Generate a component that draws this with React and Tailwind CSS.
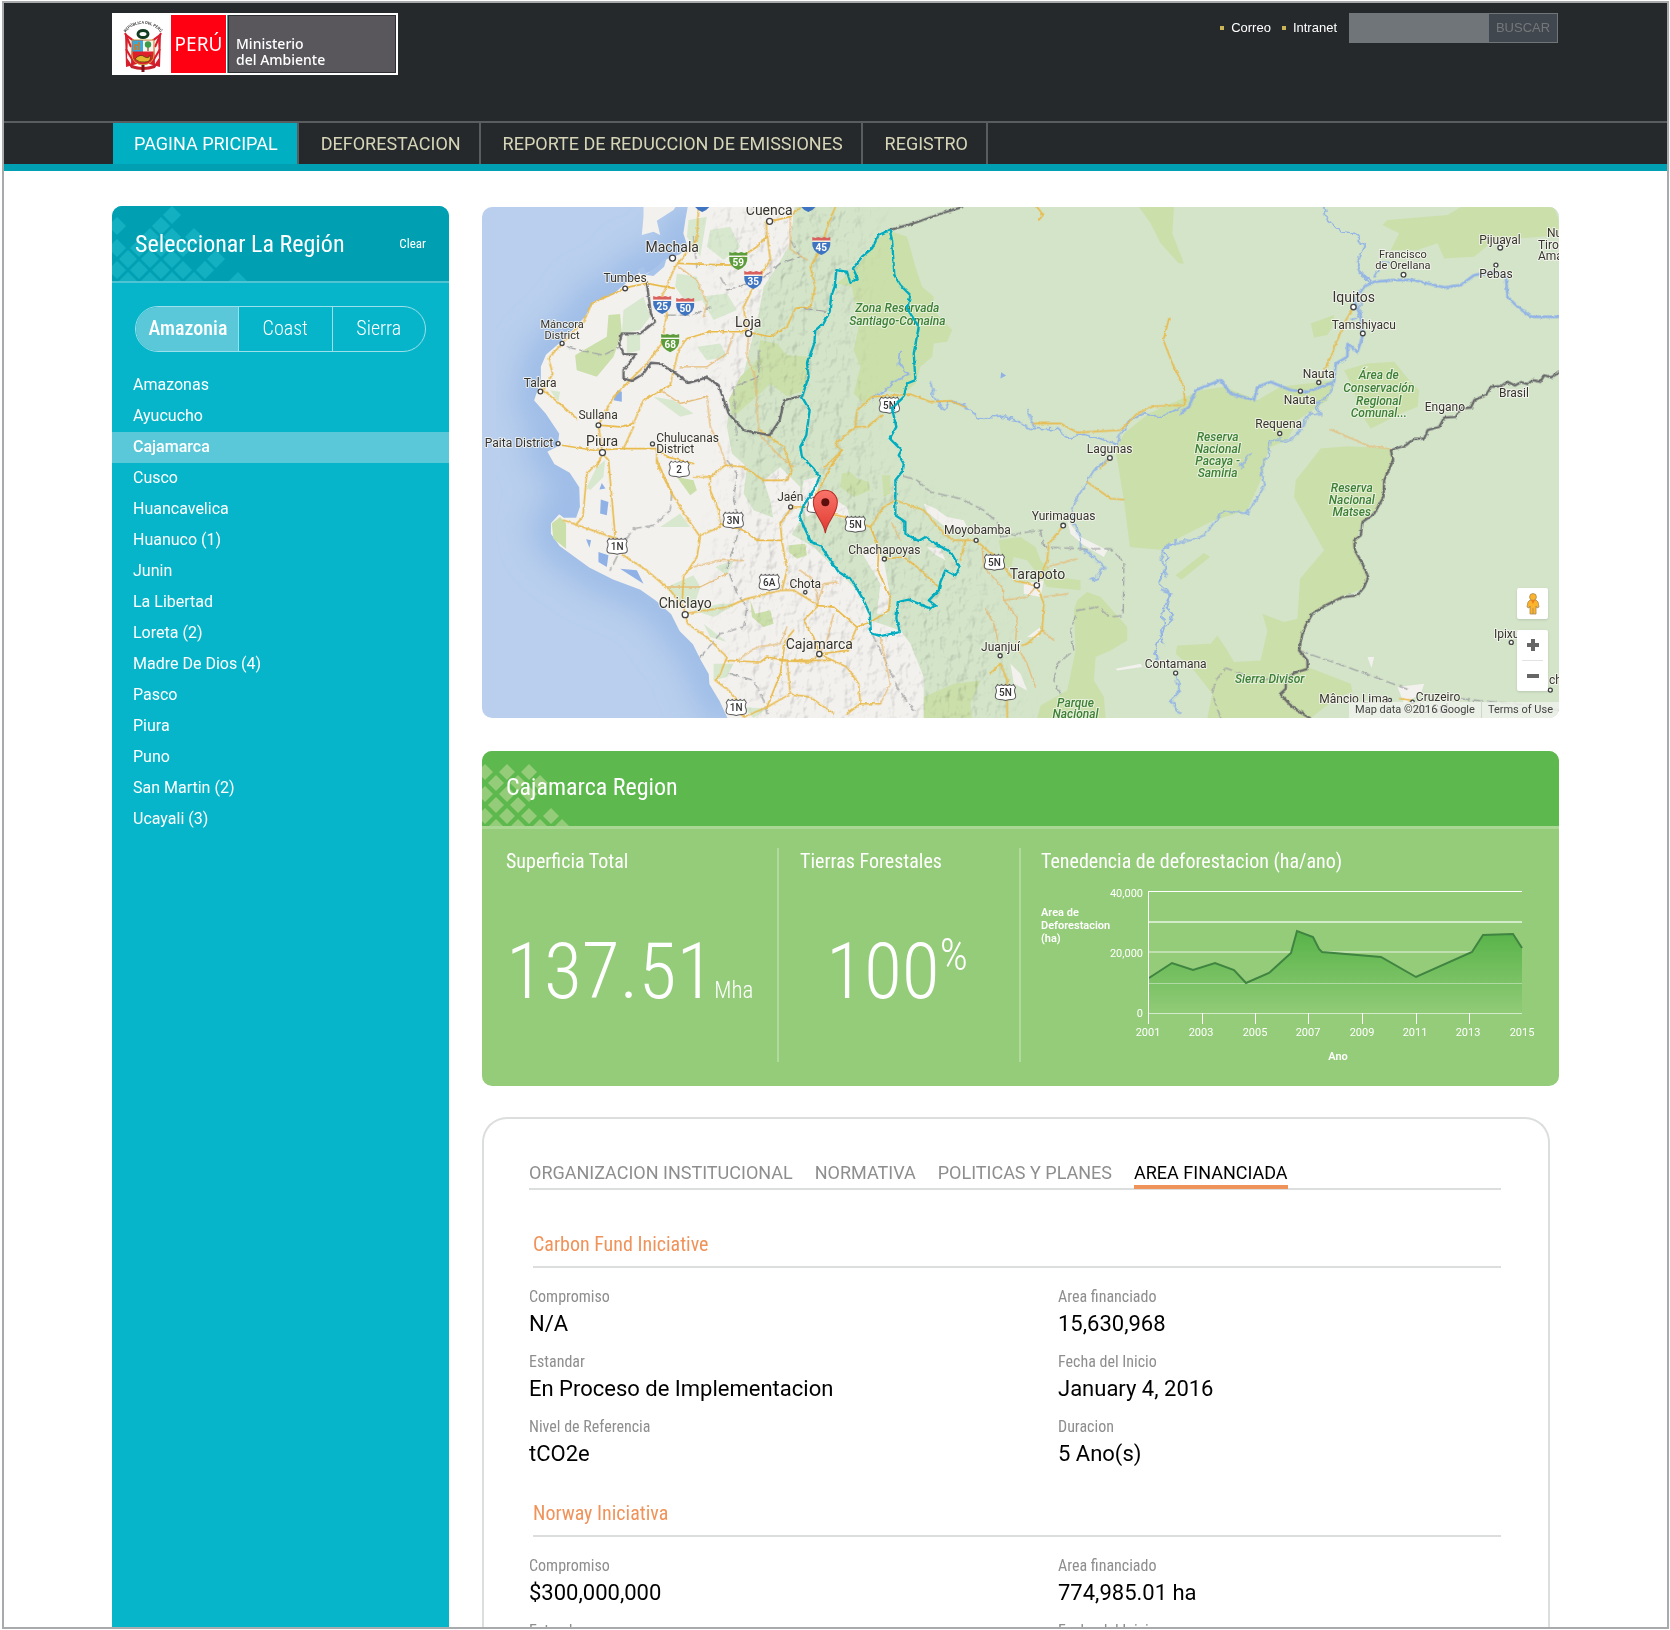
import React from "react";

const COND = "font-['Roboto_Condensed',Roboto,sans-serif]";

const NAV = ["PAGINA PRICIPAL", "DEFORESTACION", "REPORTE DE REDUCCION DE EMISSIONES", "REGISTRO"];

const REGIONS = [
  "Amazonas", "Ayucucho", "Cajamarca", "Cusco", "Huancavelica", "Huanuco (1)", "Junin", "La Libertad",
  "Loreta (2)", "Madre De Dios (4)", "Pasco", "Piura", "Puno", "San Martin (2)", "Ucayali (3)",
];

const TABS = ["ORGANIZACION INSTITUCIONAL", "NORMATIVA", "POLITICAS Y PLANES", "AREA FINANCIADA"];

const FUNDS = [
  {
    title: "Carbon Fund Iniciative",
    fields: [
      ["Compromiso", "N/A"], ["Area financiado", "15,630,968"],
      ["Estandar", "En Proceso de Implementacion"], ["Fecha del Inicio", "January 4, 2016"],
      ["Nivel de Referencia", "tCO2e"], ["Duracion", "5 Ano(s)"],
    ],
  },
  {
    title: "Norway Iniciativa",
    fields: [
      ["Compromiso", "$300,000,000"], ["Area financiado", "774,985.01 ha"],
      ["Estandar", ""], ["Fecha del Inicio", ""],
    ],
  },
];

/* ---------- Logo ---------- */

function Emblem() {
  return (
    <svg viewBox="0 0 44 56" className="h-[56px] w-[44px]" aria-hidden="true">
      <defs>
        <path id="emblem-arc" d="M4 18 A19 15 0 0 1 40 18" />
      </defs>
      <text fontSize="4" fontWeight="500" fill="#222" fontFamily="Roboto, sans-serif" textAnchor="middle">
        <textPath href="#emblem-arc" startOffset="50%">REPÚBLICA DEL PERÚ</textPath>
      </text>
      <path d="M4 17 L16 26 L16 48 L5 51 Z" fill="#d81e2c" />
      <path d="M40 17 L28 26 L28 48 L39 51 Z" fill="#d81e2c" />
      <path d="M7 22 L11 25 L10 48 L6 42 Z" fill="#f4f4f4" />
      <path d="M37 22 L33 25 L34 48 L38 42 Z" fill="#f4f4f4" />
      <path d="M4 17 L10 31 M40 17 L34 31 M5 33 L12 45 M39 33 L32 45" stroke="#d81e2c" strokeWidth="2" />
      <ellipse cx="22" cy="18" rx="5" ry="3.6" fill="none" stroke="#123c22" strokeWidth="3" />
      <path d="M11 24 H33 V38 Q33 48 22 49 Q11 48 11 38 Z" fill="#e01f2c" stroke="#c9a43b" strokeWidth="1" />
      <rect x="11.5" y="24.5" width="10.5" height="11" fill="#3aa9d8" />
      <rect x="22" y="24.5" width="10.5" height="11" fill="#f5f5ee" />
      <path d="M14 34 V29 H18 V26 M18 29 V34 M15 34 V31" stroke="#c77b2a" strokeWidth="1.6" fill="none" />
      <path d="M27 35 V30" stroke="#7b4a1e" strokeWidth="1.2" />
      <circle cx="27" cy="28.5" r="3.2" fill="#3c9a4b" />
      <path d="M14 43 Q19 37 24 41 Q28 43 29 39 Q31 46 24 46 Q18 47 14 43Z" fill="#e2b52c" stroke="#5a3a10" strokeWidth="0.8" />
      <path d="M7 47 Q22 55 37 47 L34 52 Q22 56 10 52 Z" fill="#c51f2b" />
      <path d="M22 49 V56" stroke="#7d1219" strokeWidth="3" />
    </svg>
  );
}

function Logo() {
  return (
    <a href="#inicio" className="flex h-[62px] w-[286px] bg-white p-[2px] text-white">
      <span className="flex w-[57px] items-center justify-center"><Emblem /></span>
      <span className="flex w-[55px] items-center justify-center bg-[#ff0012] font-['Noto_Sans',sans-serif] text-[19px]">PERÚ</span>
      <span className="ml-px w-px bg-[#3aa39c]" />
      <span className="flex flex-1 flex-col justify-end border border-[#2e2d31] bg-[#59575c] pb-[4px] pl-[7px] font-['Noto_Sans',sans-serif] text-[14px] leading-[16px] font-medium">
        <span>Ministerio</span>
        <span>del Ambiente</span>
      </span>
    </a>
  );
}

/* ---------- Diamond ornaments ---------- */

function Diamonds({ rows, x0, y0, r, fill, height }) {
  return (
    <svg viewBox={`0 0 140 ${height}`} width="140" height={height} className="absolute top-0 left-0" aria-hidden="true">
      {rows.map((cols, j) =>
        cols.map((k) => {
          const x = x0 + 11 * k;
          const y = y0 + 11 * j;
          return <path key={`${j}-${k}`} d={`M${x} ${y - r}L${x + r} ${y}L${x} ${y + r}L${x - r} ${y}Z`} fill={fill} />;
        })
      )}
    </svg>
  );
}

/* ---------- Map ---------- */

const poly = (s) => "M" + s.trim().split(/\s+/).join("L");

/* Shapes are grouped by map tile; every tile has its own origin. */
const PARKS = [
  [960, 0, "235,115 268,92 320,110 345,200 365,260 400,290 398,330 455,390 440,425 400,430 395,470 360,500 345,550 310,580 250,570 190,610 160,580 180,500 160,450 175,380 155,260 110,250 170,200"],
  [0, 0, "840,420 890,430 920,465 985,470 975,570 920,588 870,550 840,580 760,650 745,600 780,530 830,480"],
  [0, 0, "2005,640 2160,570 2230,560 2330,600 2400,560 2560,540 2540,600 2450,660 2420,720 2370,740 2360,760 2340,840 2300,930 2200,960 2100,1010 2040,1048 1948,1040 1930,900 1905,750 1930,700"],
  [0, 0, "1975,21 2080,21 2075,100 2110,190 2095,190 2040,130 2010,70"],
  [2040, 0, "680,60 860,45 900,21 1180,21 1193,60 1193,105 1140,110 1000,120 940,170 850,175 830,130 770,150 690,150 715,100 665,75"],
  [2040, 0, "450,370 520,345 515,380 500,405 460,412"],
  [2040, 0, "550,510 620,490 700,485 745,540 775,570 770,620 720,640 630,685 600,640 575,560"],
  [2040, 0, "445,790 480,745 560,738 690,745 700,780 670,840 668,890 640,940 600,970 582,1050 620,1130 605,1165 540,1190 495,1215 455,1240 425,1300 420,1340 440,1400 570,1450 575,1475 530,1490 450,1553 140,1553 155,1480 100,1410 45,1360 50,1335 150,1330 170,1305 200,1350 220,1385 300,1380 320,1290 305,1240 370,1265 410,1255 418,1135 490,1050 400,890 405,840"],
  [2040, 750, "45,375 130,308 148,320 62,388"],
  [900, 750, "890,450 920,425 960,440 1040,530 1040,570 990,600 945,620 940,690 970,740 975,803 770,803 780,765 860,720 885,600 880,480"],
  [900, 750, "430,740 520,700 600,690 570,760 575,803 430,803"],
  [900, 750, "185,70 210,65 230,85 265,95 270,120 220,140 180,110"],
  [900, 750, "305,75 330,75 330,130 310,140"],
  [900, 750, "655,270 720,260 765,290 780,330 830,380 900,390 900,420 800,410 740,330 700,320 690,360 665,330"],
  [0, 0, "385,345 420,342 425,400 400,470 350,530 290,510 285,465 310,450 380,410"],
  [0, 780, "240,170 258,190 258,265 220,235 215,190"],
  [0, 780, "810,420 825,460 870,450 880,490 850,500 815,470"],
  [0, 780, "590,50 640,60 650,90 630,105"],
  [0, 780, "925,255 975,250 980,285 950,295 925,275"],
];

const SOFT_GREEN = [
  [0, 0, "430,330 490,290 510,350 480,390 425,400"],
  [0, 0, "690,90 750,80 780,140 730,180 680,140"],
  [0, 0, "590,220 650,230 670,300 620,310 585,260"],
  [0, 0, "440,405 480,400 480,450 440,460"],
  [0, 0, "625,60 680,50 660,170 620,110"],
  [0, 0, "520,590 580,600 640,640 600,650"],
  [0, 0, "210,570 240,575 235,605"],
  [0, 0, "660,290 740,280 770,330 700,360"],
  [0, 0, "650,440 720,430 740,470 680,480"],
  [0, 780, "320,80 350,20 375,0 370,50 330,90"],
  [0, 780, "540,200 600,160 630,200"],
  [0, 780, "560,380 640,345 660,380 640,440 590,420"],
  [0, 780, "670,490 740,545 690,530"],
  [0, 780, "700,610 760,610 740,650 700,660"],
  [0, 780, "640,450 720,430 770,430 700,470"],
  [0, 780, "705,320 760,300 740,345"],
  [0, 780, "790,740 860,745 820,773"],
];

const PALE = [
  [900, 750, "70,90 110,80 115,120 200,170 210,210 150,195 110,180 80,200 60,160"],
  [900, 750, "430,160 465,175 500,200 550,210 560,230 500,235 470,210 440,185"],
  [900, 750, "240,300 280,280 310,330 330,440 320,490 290,490 300,400 270,350"],
  [900, 750, "440,290 480,295 495,330 460,310"],
  [900, 750, "730,400 790,390 780,440 730,430"],
  [900, 750, "860,210 900,260 980,300 970,320 910,285 870,250"],
  [900, 750, "690,640 720,670 740,720 700,700"],
  [900, 750, "740,560 780,530 775,560"],
  [900, 750, "1005,655 1080,640 1085,650 1010,660"],
  [2040, 750, "710,710 790,700 780,730 730,760"],
  [2040, 750, "620,620 640,620 632,652"],
];

const LAKES = [
  [0, 0, "412,570 425,575 425,605 400,600"],
  [0, 780, "362,118 385,125 380,165 360,160"],
  [0, 780, "355,275 385,285 380,320 355,305"],
  [0, 780, "318,237 333,240 328,262"],
  [0, 780, "420,325 470,330 490,370 450,345"],
  [0, 780, "365,68 376,85 358,88"],
  [960, 0, "602,516 617,526 600,535"],
];

const RIVERS = [
  [2040, 0, "60,640 85,620 105,570 180,540 210,580 280,600 290,560 330,545 390,570 440,575 520,545 525,490 560,470 560,430 590,455 605,410 600,350 580,300 610,260 640,245 700,240 760,240 850,262 900,255 940,225 1000,215 1035,230 1040,290 1070,320 1110,350 1193,350"],
];

const STREAMS = [
  [960, 0, "390,545 400,590 430,630 450,605 490,615 540,655 600,650 650,660 690,685 770,685 800,710 860,705 900,715 950,735 960,700 990,660 1030,640 1080,650 1140,620"],
  [2040, 0, "492,21 500,60 540,95 580,100 610,140 590,190 600,220 630,245"],
  [960, 0, "300,455 297,490 325,525 280,545 250,575 215,595"],
  [960, 0, "680,625 700,680"],
  [2040, 0, "520,550 500,590 470,610 480,640 440,645 430,680 390,720 330,720 325,760 300,810 310,860 260,940 190,930 150,980 120,1010 60,1025 20,1035 0,1070 20,1130"],
  [2040, 0, "270,760 245,790 240,800"],
  [900, 750, "1190,270 1150,300 1160,330 1135,400 1170,430 1145,480 1150,540 1120,600 1130,630"],
  [2040, 750, "0,420 30,430 20,470 40,500 0,540 10,580"],
  [2040, 750, "45,680 60,720 30,750 60,790"],
  [900, 750, "980,30 940,60 910,110 880,160 870,200 900,260 900,290 940,320 970,350 950,385 930,388"],
  [2040, 0, "600,300 600,340 575,360"],
  [2040, 0, "690,190 660,190 640,230"],
];

const BORDERS = [
  [0, 0, "500,250 512,340 525,365 480,400 425,400 417,430 430,462 468,462 430,510 430,535 455,542 490,520 512,488 540,490 580,515 625,548 680,532 715,555 745,640 790,690 868,705 898,660 912,600 960,588"],
  [960, 0, "268,90 345,68 430,38 485,21"],
  [2040, 0, "1193,518 1170,532 1150,525 1138,545 1115,540 1100,552 1080,546 1062,556 1040,545 1020,558 990,560 975,585 940,600 930,622 900,625 885,650 850,652 835,680 800,690 790,715 760,715 735,735 690,750 697,780 670,840 668,890 640,940 605,965 600,1005 580,1020 582,1050 605,1090 622,1130 610,1160 590,1185 545,1190 495,1215 455,1240 435,1275 425,1300 415,1350 440,1380 440,1405 400,1418 375,1440 375,1465 358,1480 385,1510 410,1530 448,1553"],
];

const DISTRICTS = [
  [900, 750, "370,78 410,90 450,125 540,145 610,180 650,215 660,260 740,245 780,240 790,290 900,295 990,295 1030,335 1028,495 990,500 950,470 890,480 870,540 880,600 830,640 820,690 840,730"],
  [2040, 750, "415,600 560,650 750,720"],
  [2040, 750, "900,745 1060,760 1193,780"],
  [0, 780, "575,95 570,150 520,195 460,205 430,250 390,330"],
  [2040, 750, "180,803 155,730 165,690 195,653 300,690 360,680"],
  [0, 0, "260,440 300,450 370,465 420,440"],
  [0, 780, "740,0 770,40 760,120 780,200 740,320 770,400 800,440 790,500 720,520 660,590"],
  [0, 780, "750,640 820,660 850,720 860,760"],
  [900, 750, "275,550 320,640 350,710 400,780"],
  [0, 0, "930,120 960,170 900,190 840,240 740,270 720,230"],
  [0, 0, "640,110 650,200"],
  [0, 0, "560,345 640,345 690,320"],
  [0, 0, "970,325 1045,335"],
  [0, 0, "835,450 835,530 760,560 770,720"],
];

const ROADS = [
  [0, 0, "500,250 440,262 335,310 310,365 246,430 205,475 218,520 190,570 250,620 290,655"],
  [0, 0, "245,735 340,750 430,745 530,745 560,770 640,790"],
  [0, 0, "355,675 420,680 460,670 490,600 570,555 595,450 620,415 690,395 800,395"],
  [0, 0, "355,675 400,590 450,540 500,490 545,430 560,340 545,290 585,200 650,120 655,21"],
  [0, 0, "355,675 367,757"],
  [0, 0, "595,190 750,195 830,140 860,110 858,64"],
  [0, 0, "500,250 580,265"],
  [0, 0, "800,395 790,320 820,260 870,180 862,110"],
  [0, 0, "870,64 930,50 960,21"],
  [0, 0, "800,395 870,410 920,380 945,325 990,320 1005,260 990,200 1020,150 1045,70 1065,21"],
  [0, 0, "460,680 430,745"],
  [0, 0, "530,745 530,790 575,880"],
  [0, 780, "350,20 367,-20 385,0 405,230 430,285 500,330 570,390 610,440 622,490 680,530 740,590 720,640 705,660 745,690 770,720 790,770"],
  [0, 780, "360,0 320,40 308,170 290,190"],
  [0, 780, "250,180 400,232"],
  [0, 780, "530,0 575,100 625,180 660,230 650,290 610,350 605,440"],
  [0, 780, "660,225 720,200 715,150 690,90 690,50 640,50"],
  [0, 780, "690,50 735,15 790,20 850,60 920,60 935,30 910,-40 840,-90"],
  [0, 780, "720,190 790,210 830,240 905,240 900,190 935,140"],
  [0, 780, "905,240 920,330 905,390 800,415 740,440 615,460"],
  [0, 780, "740,600 840,605 860,590 920,600 1050,600"],
  [0, 780, "905,390 940,390 1015,435 970,480 1000,530 1017,580"],
  [0, 780, "920,600 930,700 860,740 790,770"],
  [0, 780, "930,700 990,710 1060,760"],
  [0, 780, "860,740 900,640 915,540 940,510"],
  [900, 750, "185,0 150,50 120,110 90,170 32,170"],
  [900, 750, "150,190 210,205 270,230 310,170 345,150 430,180 490,250 520,270 587,270 620,300 650,320 700,390 769,405 800,330 805,280 848,226"],
  [900, 750, "270,230 295,290 292,360 330,440 325,480 270,515 230,530 160,470 110,465"],
  [900, 750, "312,326 370,320 410,350 475,410"],
  [900, 750, "555,270 540,330"],
  [900, 750, "769,405 790,460 785,540 740,580 725,585"],
  [900, 750, "659,640 630,670"],
  [900, 750, "660,640 680,690 680,803"],
  [900, 750, "117,611 200,650 235,700 240,760 300,760"],
  [900, 750, "240,760 200,790"],
  [900, 750, "0,630 90,635 117,611"],
  [900, 750, "117,611 200,600 230,530"],
  [900, 750, "920,95 990,145 1030,148"],
  [900, 750, "988,25 960,55"],
  [960, 0, "75,800 125,750 105,730 165,680 200,680 245,645"],
  [960, 0, "165,680 170,630 215,590 330,582 390,605 450,602 495,620"],
  [960, 0, "700,670 780,670 830,697 960,690 1010,640 1060,618 1152,615 1150,560 1115,490 1088,420 1105,355"],
  [960, 0, "710,21 728,45 715,60"],
  [2040, 0, "578,321 550,370 510,470 474,547"],
  [2040, 750, "720,745 755,750"],
];

const MINOR_ROADS = [
  [900, 750, "605,290 610,350 665,410 670,450 740,440 769,405"],
  [900, 750, "670,450 710,500 705,580 740,640 765,710"],
  [900, 750, "615,475 640,520 655,580"],
  [900, 750, "800,350 890,325"],
  [900, 750, "790,440 860,430"],
  [900, 750, "785,540 820,570"],
  [900, 750, "335,220 360,270"],
  [2040, 0, "510,688 625,738 690,745"],
  [0, 0, "595,200 650,240 680,310 670,350"],
  [0, 0, "600,500 680,500 740,460 760,400"],
  [0, 0, "805,400 800,470 825,530 835,700 900,770 940,800"],
  [0, 0, "540,570 600,610 680,590 690,680 720,740 740,800"],
  [0, 0, "930,50 930,150 980,180"],
  [0, 780, "640,320 720,300 790,300"],
  [0, 780, "560,380 660,380 740,340"],
  [0, 780, "770,600 830,560 900,550 920,500"],
  [0, 780, "1060,460 1040,540 1017,580"],
  [0, 780, "960,330 1000,360 1015,435"],
  [900, 750, "110,465 130,400 170,395"],
  [900, 750, "300,760 330,700 300,560"],
];

const OUTLINE =
  "1228,90 1195,105 1175,145 1145,170 1118,205 1132,235 1110,248 1100,215 1068,210 1063,260 1052,290 1048,335 1030,370 1005,390 1002,430 980,490 985,530 965,590 988,630 978,705 960,740 965,770 1000,805 1018,830 1000,870 970,915 958,950 992,1025 1020,1035 1075,1115 1115,1140 1150,1200 1168,1240 1172,1298 1200,1307 1258,1295 1248,1255 1252,1205 1285,1198 1350,1225 1365,1215 1345,1200 1375,1170 1380,1145 1395,1110 1425,1125 1438,1100 1410,1055 1365,1030 1335,1010 1315,1022 1275,1000 1275,965 1245,945 1245,840 1268,810 1270,790 1255,765 1263,750 1228,715 1248,680 1235,625 1270,590 1280,550 1305,540 1300,460 1315,380 1280,325 1290,285 1260,255 1242,225 1235,120 1228,90";

const COAST =
  "625,21 618,60 612,100 625,140 600,165 560,180 545,205 500,222 480,215 470,235 440,250 400,285 340,308 318,350 290,380 246,425 200,465 185,500 185,540 165,600 200,640 240,700 235,740 205,755 225,790 270,815 300,860 302,920 290,955 250,955 238,945 215,970 215,1000 240,1035 330,1100 400,1135 480,1165 530,1200 575,1240 600,1290 640,1330 665,1380 688,1420 690,1450 720,1500 748,1560";

const CITY_DOTS = [
  [868, 64, 9], [577, 174, 9], [435, 265, 7], [246, 430, 6], [181, 574, 7], [355, 675, 7], [234, 730, 6], [367, 757, 9],
  [517, 731, 6], [805, 400, 9], [1888, 773, 7], [931, 920, 6], [975, 1176, 5], [615, 1243, 9], [1017, 1361, 8],
  [1212, 1076, 6], [1487, 1020, 6], [1669, 1155, 8], [1748, 976, 7], [1559, 1366, 6], [2085, 1418, 6], [2618, 321, 8],
  [2646, 400, 7], [2768, 224, 7], [3058, 143, 7], [3045, 195, 6], [2514, 547, 6], [2459, 573, 6], [2397, 700, 6],
  [3091, 1326, 6], [2727, 1499, 5], [2795, 1504, 5], [3208, 1469, 6],
];

const CITIES = [
  [287, 8, 14, "Cuenca"], [190, 45, 14, "Machala"], [143, 75, 12, "Tumbes"], [80, 121, 11, "Máncora"], [80, 132, 11, "District"],
  [58, 180, 12, "Talara"], [116, 212, 12, "Sullana"], [37, 240, 12, "Paita District"], [120, 239, 14, "Piura"],
  [266, 120, 14, "Loja"], [627, 246, 12, "Lagunas"], [308, 294, 12, "Jaén"], [323, 381, 12, "Chota"],
  [203, 401, 14, "Chiclayo"], [337, 442, 14, "Cajamarca"], [402, 347, 12, "Chachapoyas"], [495, 327, 12, "Moyobamba"],
  [555, 372, 14, "Tarapoto"], [581, 313, 12, "Yurimaguas"], [518, 444, 12, "Juanjuí"], [693, 461, 12, "Contamana"],
  [871, 95, 14, "Iquitos"], [881, 122, 12, "Tamshiyacu"], [920, 51, 11, "Francisco"], [920, 62, 11, "de Orellana"],
  [1017, 37, 12, "Pijuayal"], [1013, 71, 12, "Pebas"], [836, 171, 12, "Nauta"], [817, 197, 12, "Nauta"],
  [796, 221, 12, "Requena"], [962, 204, 12, "Engano"], [1031, 190, 12, "Brasil"], [871, 496, 12, "Mâncio Lima"],
  [949, 506, 12, "do Sul"],
];

const CITIES_LEFT = [
  [174, 235, "Chulucanas"], [174, 246, "District"], [1064, 30, "Nu"], [1055, 42, "Tiro"], [1055, 53, "Ama"],
  [1011, 431, "Ipixu"], [933, 494, "Cruzeiro"], [1066, 477, "ch"],
];

const PARK_NAMES = [
  [415, 105, "Zona Reservada"], [415, 118, "Santiago-Comaina"], [593, 500, "Parque"], [593, 511, "Nacional"],
  [896, 172, "Área de"], [896, 185, "Conservación"], [896, 198, "Regional"], [896, 210, "Comunal..."],
  [735, 234, "Reserva"], [735, 246, "Nacional"], [735, 258, "Pacaya -"], [735, 270, "Samiria"],
  [869, 285, "Reserva"], [869, 297, "Nacional"], [869, 309, "Matses"], [787, 476, "Sierra Divisor"],
];

const US_SHIELDS = [
  [197, 262, "2"], [135, 339, "1N"], [251, 313, "3N"], [287, 375, "6A"], [254, 500, "1N"], [335, 298, ""],
  [407, 198, "5N"], [373, 317, "5N"], [512, 355, "5N"], [523, 485, "5N"],
];

const INTERSTATES = [
  [339, 38, "45", "#3f74c1"], [271, 72, "35", "#3f74c1"], [180, 97, "25", "#3f74c1"], [203, 99, "50", "#3f74c1"],
  [256, 53, "59", "#5c9c3b"], [188, 135, "68", "#5c9c3b"], [220, -5, "", "#3f74c1"], [326, -5, "", "#3f74c1"],
];

function Shapes({ items, ...rest }) {
  return (
    <g {...rest}>
      {items.map(([x, y, pts], i) => (
        <path key={i} d={poly(pts)} transform={`translate(${x} ${y})`} />
      ))}
    </g>
  );
}

function MapDrawing() {
  return (
    <svg viewBox="0 0 1076 511" className="block h-auto w-full" role="img" aria-label="Mapa de la región Cajamarca" fontFamily="Roboto, sans-serif">
      <defs>
        <filter id="shore" x="-20%" y="-20%" width="140%" height="140%">
          <feGaussianBlur stdDeviation="46" />
        </filter>
        <filter id="wiggle" filterUnits="userSpaceOnUse" x="0" y="0" width="3260" height="1580">
          <feTurbulence type="fractalNoise" baseFrequency="0.08" numOctaves="2" seed="4" />
          <feDisplacementMap in="SourceGraphic" scale="9" xChannelSelector="R" yChannelSelector="G" />
        </filter>
        <filter id="meander" filterUnits="userSpaceOnUse" x="0" y="0" width="3260" height="1580">
          <feTurbulence type="fractalNoise" baseFrequency="0.05" numOctaves="2" seed="7" />
          <feDisplacementMap in="SourceGraphic" scale="22" xChannelSelector="R" yChannelSelector="G" />
        </filter>
        <filter id="relief" filterUnits="userSpaceOnUse" x="0" y="0" width="1076" height="511">
          <feTurbulence type="fractalNoise" baseFrequency="0.09 0.07" numOctaves="3" seed="9" result="n" />
          <feDiffuseLighting in="n" surfaceScale="3" diffuseConstant="1.28" lightingColor="#ffffff" result="l">
            <feDistantLight azimuth="225" elevation="55" />
          </feDiffuseLighting>
          <feComposite in="l" in2="SourceGraphic" operator="in" />
        </filter>
        <filter id="soften" x="-10%" y="-10%" width="120%" height="120%">
          <feGaussianBlur stdDeviation="16" />
        </filter>
        <mask id="mountains">
          <path d="M235 -40 L390 -40 L370 120 L380 200 L390 260 L440 300 L500 340 L540 560 L280 560 L250 430 L235 380 L250 250 L260 210 L220 165 L235 80 Z" fill="#fff" filter="url(#soften)" />
        </mask>
        <linearGradient id="pin" x1="0" y1="0" x2="0" y2="1">
          <stop offset="0" stopColor="#f9746a" />
          <stop offset="1" stopColor="#e0392f" />
        </linearGradient>
      </defs>
      <rect width="1076" height="511" fill="#b9cfed" />
      <g transform="translate(-2 -7) scale(0.33333)">
        <path d={poly(COAST)} fill="none" stroke="#9dbce7" strokeWidth="120" filter="url(#shore)" />
        <path d={poly(COAST) + "L3300 1560L3300 0L625 0Z"} fill="#f3f1ee" stroke="#f3f1ee" strokeWidth="5" strokeLinejoin="round" />
        <path d="M490 0L490 50L485 105L520 95L540 105L530 62L580 30L600 0Z" fill="#f3f1ee" />
        <path d="M472 208L490 200L500 222L530 200L560 172L552 200L520 228L480 222Z" fill="#a9c4ea" />
        <Shapes items={SOFT_GREEN} fill="#d8e8cf" />
        <path
          d="M945 0L930 130L890 200L850 260L835 340L815 420L790 520L750 600L740 680L755 760L800 800L790 880L820 930L900 960L930 1000L1000 1040L1080 1120L1140 1180L1170 1260L1260 1290L1290 1330L1330 1430L1330 1560L3300 1560L3300 0Z"
          fill="#d3e4c9"
        />
        <path d="M850 840L900 800L960 860L960 960L930 1010L880 960L870 900Z" fill="#f3f1ee" />
        <Shapes items={PARKS} fill="#cbdfaa" strokeLinejoin="round" />
        <Shapes items={PALE} fill="#f3f1ee" />
      </g>
      <g mask="url(#mountains)" className="mix-blend-multiply" opacity="0.5">
        <rect width="1076" height="511" fill="#fff" filter="url(#relief)" />
      </g>
      <g transform="translate(-2 -7) scale(0.33333)" fill="none" strokeLinejoin="round" strokeLinecap="round">
        <Shapes items={LAKES} fill="#8fb1e5" />
        <g filter="url(#meander)">
          <Shapes items={STREAMS} stroke="#92b3e6" strokeWidth="5" />
        </g>
        <g filter="url(#wiggle)">
          <Shapes items={DISTRICTS} stroke="#a3a5a6" strokeWidth="4" strokeDasharray="26 14" />
          <Shapes items={RIVERS} stroke="#92b3e6" strokeWidth="8" />
          <Shapes items={MINOR_ROADS} stroke="#e6bd7a" strokeWidth="4" />
          <Shapes items={ROADS} stroke="#e9bb4d" strokeWidth="5" />
          <Shapes items={BORDERS} stroke="#68686a" strokeWidth="7" />
        </g>
      </g>
      <g transform="translate(-2 -7) scale(0.33333)">
        {CITY_DOTS.map(([x, y, r]) => (
          <circle key={`${x}-${y}`} cx={x} cy={y} r={r} fill="#fff" stroke="#444" strokeWidth="4" />
        ))}
      </g>

      {US_SHIELDS.map(([x, y, t], i) => (
        <g key={i} transform={`translate(${x} ${y})`}>
          <path
            d="M-8 -8 Q-6 -6 -4 -8 Q-2 -6 0 -8 Q2 -6 4 -8 Q6 -6 8 -8 L10 -5 Q8 -2 10 2 Q11 7 6 7 Q3 7 0 8 Q-3 7 -6 7 Q-11 7 -10 2 Q-8 -2 -10 -5 Z"
            fill="#fff" stroke="#5b5b5b" strokeWidth="1"
          />
          <text textAnchor="middle" y="4" fontSize="10" fontWeight="500" fill="#333">{t}</text>
        </g>
      ))}
      {INTERSTATES.map(([x, y, t, c], i) => (
        <g key={i} transform={`translate(${x} ${y})`}>
          <path d="M-9 -3 H9 Q10 6 0 10 Q-10 6 -9 -3Z" fill={c} />
          <path d="M-9 -8 L-6 -7 L-3 -8 L0 -7 L3 -8 L6 -7 L9 -8 V-4 H-9Z" fill={c === "#3f74c1" ? "#d9605c" : c} />
          <path d="M-9 -4 H9" stroke="#fff" strokeWidth="1" />
          <text textAnchor="middle" y="6" fontSize="10" fontWeight="700" fill="#fff">{t}</text>
        </g>
      ))}

      <g fill="#37332e" stroke="#f7f7f2" strokeWidth="2" strokeOpacity="0.8" paintOrder="stroke" strokeLinejoin="round">
        {CITIES.map(([x, y, s, t], i) => (
          <text key={i} x={x} y={y} fontSize={s} textAnchor="middle">{t}</text>
        ))}
        {CITIES_LEFT.map(([x, y, t]) => (
          <text key={`${x}${y}`} x={x} y={y} fontSize="12">{t}</text>
        ))}
      </g>
      <g fill="#3d7f37" stroke="#eef5e6" strokeWidth="2" strokeOpacity="0.8" paintOrder="stroke" fontStyle="italic">
        {PARK_NAMES.map(([x, y, t]) => (
          <text key={`${x}${y}`} x={x} y={y} fontSize="12" fontWeight="500" textAnchor="middle">{t}</text>
        ))}
      </g>
      <g transform="translate(-2 -7) scale(0.33333)">
        <path d={poly(OUTLINE) + "Z"} fill="none" stroke="#04adc0" strokeWidth="7" strokeLinejoin="round" filter="url(#wiggle)" />
      </g>
      <path d="M343 326 C342 314 331 308 331 295 A12 12 0 0 1 355 295 C355 308 344 314 343 326Z" fill="url(#pin)" stroke="#b52d26" strokeWidth="1" />
      <circle cx="343" cy="295" r="4" fill="#5c0f0c" />
    </svg>
  );
}

function MapPanel() {
  return (
    <section aria-label="Mapa" className="relative overflow-hidden rounded-[10px]">
      <MapDrawing />
      <div className="absolute right-[11px] bottom-[27px] flex flex-col gap-[11px]">
        <button type="button" aria-label="Street View" className="flex h-[31px] w-[31px] items-center justify-center rounded-[2px] bg-white shadow-sm">
          <svg viewBox="0 0 14 22" className="h-[22px] w-[14px]" aria-hidden="true">
            <path d="M4 7 H10 L12 9 L13 14 L11 15 L10 13 V21 H4 V13 L3 15 L1 14 L2 9 Z" fill="#fbb42c" stroke="#a98a56" strokeWidth="0.8" />
            <circle cx="7" cy="4" r="3.4" fill="#fbb42c" stroke="#a98a56" strokeWidth="0.8" />
            <path d="M5 7 L7 11 L9 7 Z" fill="#f07f1a" />
            <path d="M7 15 V21" stroke="#a98a56" strokeWidth="0.8" />
          </svg>
        </button>
        <div className="flex w-[31px] flex-col items-center rounded-[2px] bg-white shadow-sm">
          <button type="button" aria-label="Acercar" className="flex h-[30px] w-full items-center justify-center">
            <svg viewBox="0 0 12 12" className="h-3 w-3"><path d="M6 0V12M0 6H12" stroke="#666" strokeWidth="4" /></svg>
          </button>
          <span className="h-px w-[21px] bg-[#e3e3e3]" />
          <button type="button" aria-label="Alejar" className="flex h-[30px] w-full items-center justify-center">
            <svg viewBox="0 0 12 12" className="h-3 w-3"><path d="M0 6H12" stroke="#666" strokeWidth="4" /></svg>
          </button>
        </div>
      </div>
      <div className="absolute right-0 bottom-0 flex h-4 items-center bg-[#f0f3ee]/80 font-[Roboto,sans-serif] text-[11px] text-[#444]">
        <span className="px-[6px]">Map data ©2016 Google</span>
        <a href="#terminos" className="border-l border-[#cfd6cb] px-[6px]">Terms of Use</a>
      </div>
    </section>
  );
}

/* ---------- Region summary ---------- */

const TREND = "1,87 24,72 45,79 67,72 86,79 98,92 121,82 143,62 149,40 165,46 171,58 174,61 233,66 268,86 324,61 335,44 365,43 374,57";
const GRID = [
  [0, 1], [30, 0.6], [61, 0.8], [92, 0.4], [122, 0.6],
];

function TrendChart() {
  return (
    <svg viewBox="0 0 496 175" className="block h-auto w-full max-w-[496px]" role="img" aria-label="Tenedencia de deforestacion" fontFamily="Roboto, sans-serif" fontSize="11" fill="#fff">
      <defs>
        <linearGradient id="trend" x1="0" y1="0" x2="0" y2="1">
          <stop offset="0" stopColor="#57b348" />
          <stop offset="1" stopColor="#57b348" stopOpacity="0.05" />
        </linearGradient>
      </defs>
      <g fontWeight="600">
        <text x="0" y="29">Area de</text>
        <text x="0" y="42">Deforestacion</text>
        <text x="0" y="55">(ha)</text>
        <text x="297" y="173" textAnchor="middle">Ano</text>
      </g>
      <g textAnchor="end">
        <text x="102" y="10">40,000</text>
        <text x="102" y="70">20,000</text>
        <text x="102" y="130">0</text>
      </g>
      <g transform="translate(107 4)">
        <path d={`M1,122L${TREND.split(" ").join("L")}L374,122Z`} fill="url(#trend)" />
        {GRID.map(([y, o]) => (
          <path key={y} d={y === 61 ? "M0 61H144M174 61H324" : `M0 ${y === 30 ? 31 : y + 0.5}H374`} stroke="#fff" strokeOpacity={o} strokeWidth={y === 30 ? 2 : 1} />
        ))}
        <path d={poly(TREND)} fill="none" stroke="#3f8440" strokeWidth="2" />
        <path d="M0.5 0V133" stroke="#fff" />
        {[54, 107, 160, 214, 268, 321].map((x) => (
          <path key={x} d={`M${x + 0.5} 122V133`} stroke="#fff" />
        ))}
        {[2001, 2003, 2005, 2007, 2009, 2011, 2013, 2015].map((year, i) => (
          <text key={year} x={Math.round(i * 53.4)} y="145" textAnchor="middle">{year}</text>
        ))}
      </g>
    </svg>
  );
}

function RegionSummary() {
  return (
    <section className="overflow-hidden rounded-[10px] bg-[#94cc79] text-white">
      <header className="relative flex h-[75px] items-center overflow-hidden bg-[#5db84d] pb-[3px] pl-6">
        <Diamonds rows={[[0, 2, 4], [1, 3, 5], [0, 2, 4], [1, 3], [0, 2, 4, 6], [1, 3, 5, 7]]} x0={3} y0={21} r={8} fill="#94cc79" height={75} />
        <h2 className={`relative text-[24px] ${COND}`}>Cajamarca Region</h2>
      </header>
      <div className="flex border-t-[3px] border-[#abd794] pt-[19px] pb-6">
        <div className="w-[295px] pl-6">
          <h3 className={`text-[20px] leading-[27px] ${COND}`}>Superficia Total</h3>
          <p className={`mt-[58px] flex items-baseline leading-none font-light ${COND}`}>
            <span className="text-[78px]">137.51</span>
            <span className="text-[23px]">Mha</span>
          </p>
        </div>
        <div className="w-[242px] border-l-2 border-[#b2da9f] pl-[21px]">
          <h3 className={`text-[20px] leading-[27px] ${COND}`}>Tierras Forestales</h3>
          <p className={`mt-[58px] flex items-start pl-[26px] leading-none font-light ${COND}`}>
            <span className="text-[78px]">100</span>
            <span className="text-[44px]">%</span>
          </p>
        </div>
        <div className="min-w-0 flex-1 border-l-2 border-[#b2da9f] pl-5">
          <h3 className={`text-[20px] leading-[27px] ${COND}`}>Tenedencia de deforestacion (ha/ano)</h3>
          <div className="mt-3"><TrendChart /></div>
        </div>
      </div>
    </section>
  );
}

/* ---------- Funding ---------- */

function FundingPanel() {
  return (
    <section className="mr-[9px] rounded-t-[25px] border-2 border-b-0 border-[#dcdddd] pt-[41px] pr-[47px] pb-10 pl-[45px]">
      <div role="tablist" className="flex gap-[22px] border-b-2 border-[#dcdddd] font-[Roboto,sans-serif] text-[18px] leading-[25px] text-[#8e8e8e]">
        {TABS.map((t, i) => (
          <button
            key={t}
            type="button"
            role="tab"
            aria-selected={i === 3}
            className={i === 3 ? "-mb-px border-b-4 border-[#f0935a] text-black" : "-mb-px border-b-4 border-transparent"}
          >
            {t}
          </button>
        ))}
      </div>
      {FUNDS.map((f, i) => (
        <article key={f.title} className={i === 0 ? "mt-[41px]" : "mt-8"}>
          <h3 className={`ml-1 border-b-2 border-[#dcdddd] pb-[8px] text-[20px] leading-[27px] text-[#f0935a] ${COND}`}>{f.title}</h3>
          <dl className="mt-[17px] grid grid-cols-[529px_1fr] gap-y-3">
            {f.fields.map(([label, value]) => (
              <div key={label}>
                <dt className={`text-[16px] leading-6 text-[#8e8e8e] ${COND}`}>{label}</dt>
                <dd className="min-h-[29px] font-[Roboto,sans-serif] text-[22px] leading-[29px] text-black">{value}</dd>
              </div>
            ))}
          </dl>
        </article>
      ))}
    </section>
  );
}

/* ---------- Sidebar ---------- */

function Sidebar() {
  return (
    <aside className="w-[337px] shrink-0 overflow-hidden rounded-t-[10px] bg-[#06b5ca] text-white">
      <header className="relative flex h-[75px] items-center justify-between overflow-hidden bg-[#00a0b2] px-[23px]">
        <Diamonds rows={[[5], [0, 4], [3, 5, 7], [0, 2, 4, 6], [1, 3, 5, 9], [0, 2, 4, 6, 8], [1, 3, 5, 7, 11]]} x0={5} y0={9} r={9} fill="#12b0c1" height={75} />
        <h2 className={`relative text-[24px] ${COND}`}>Seleccionar La Región</h2>
        <button type="button" className={`text-[13px] ${COND}`}>Clear</button>
      </header>
      <div className="border-t-2 border-[#4fc3d3] pt-[23px]">
        <div className={`mx-[23px] flex h-[46px] overflow-hidden rounded-full border border-[#9be0ea] text-[20px] ${COND}`}>
          <button type="button" aria-pressed="true" className="w-[102px] bg-[#5ac8d8] pb-[2px] pl-[2px] font-medium">Amazonia</button>
          <button type="button" aria-pressed="false" className="flex-1 border-l border-[#9be0ea] pb-[2px] font-light">Coast</button>
          <button type="button" aria-pressed="false" className="flex-1 border-l border-[#9be0ea] pb-[2px] font-light">Sierra</button>
        </div>
        <ul className="mt-[18px] font-[Roboto,sans-serif] text-[16px]">
          {REGIONS.map((r) => (
            <li key={r}>
              <a href={`#${r}`} className={r === "Cajamarca" ? "block h-[31px] bg-[#5ac8d8] pl-[21px] leading-[30px] font-medium" : "block h-[31px] pl-[21px] leading-[30px]"}>{r}</a>
            </li>
          ))}
        </ul>
      </div>
    </aside>
  );
}

export default function App() {
  return (
    <div className="h-screen bg-white py-px pr-px pl-[2px]">
      <div className="flex h-full flex-col overflow-y-auto border-2 border-[#a8aaab] [scrollbar-width:none]">
        <header className="shrink-0 bg-[#25292c]">
          <div className="flex h-[118px] items-start justify-between pt-[10px] pr-[109px] pl-[108px]">
            <Logo />
            <div className="flex items-center font-['Liberation_Sans',Arial,sans-serif] text-[13px] text-white">
              <span className="mr-[7px] h-1 w-1 bg-[#c9b456]" />
              <a href="#correo">Correo</a>
              <span className="mr-[7px] ml-[11px] h-1 w-1 bg-[#c9b456]" />
              <a href="#intranet">Intranet</a>
              <form className="ml-[12px] flex h-[30px] border border-[#707579]">
                <input type="search" aria-label="Buscar" className="w-[139px] bg-[#707579] px-2 outline-none" />
                <button type="button" className="w-[68px] bg-[#40474e] text-[#74787b]">BUSCAR</button>
              </form>
            </div>
          </div>
          <nav className="flex border-t-2 border-b-[7px] border-t-[#5a5d60] border-b-[#00a0b2] px-[109px] font-[Roboto,sans-serif] text-[18px]">
            {NAV.map((n, i) => (
              <a
                key={n}
                href={`#${i}`}
                className={
                  i === 0
                    ? "flex h-[41px] items-center border-r-2 border-[#5a5d60] bg-[#00afc1] pr-[19px] pl-[21px] text-white"
                    : "flex h-[41px] items-center border-r-2 border-[#5a5d60] pr-[18px] pl-[22px] text-[#d6d5b8]"
                }
              >
                {n}
              </a>
            ))}
          </nav>
        </header>
        <main className="flex flex-1 gap-[33px] px-[108px] pt-[35px]">
          <Sidebar />
          <div className="flex min-w-0 flex-1 flex-col pt-px">
            <MapPanel />
            <div className="mt-[33px]"><RegionSummary /></div>
            <div className="mt-[31px]"><FundingPanel /></div>
          </div>
        </main>
      </div>
    </div>
  );
}
